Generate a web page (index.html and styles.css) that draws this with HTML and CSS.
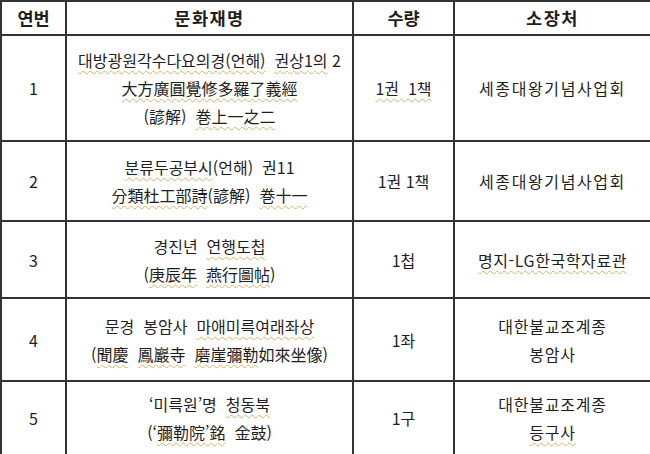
FILE: index.html
```html
<!DOCTYPE html>
<html lang="ko">
<head>
<meta charset="utf-8">
<link rel="stylesheet" href="styles.css">
</head>
<body>
<table class="tbl">
  <colgroup>
    <col class="c1"><col class="c2"><col class="c3"><col class="c4">
  </colgroup>
  <thead>
    <tr class="rh">
      <th>연번</th><th class="hname">문화재명</th><th>수량</th><th class="hold">소장처</th>
    </tr>
  </thead>
  <tbody>
    <tr class="r1">
      <td>1</td>
      <td><span class="sp">대방광원각수다요의경(언해)</span>&nbsp; <span class="sp">권상1의</span> 2<br><span class="sp">大方廣圓覺修多羅了義經</span><br>(諺解)&nbsp; <span class="sp">巻上一之二</span></td>
      <td><span class="sp">1권&nbsp; 1책</span></td>
      <td class="hold">세종대왕기념사업회</td>
    </tr>
    <tr class="r2">
      <td>2</td>
      <td><span class="sp">분류두공부시</span>(언해)&nbsp; 권11<br><span class="sp">分類杜工部詩</span>(諺解)&nbsp; <span class="sp">巻十一</span></td>
      <td>1권 1책</td>
      <td class="hold">세종대왕기념사업회</td>
    </tr>
    <tr class="r3">
      <td>3</td>
      <td>경진년&nbsp; <span class="sp">연행도첩</span><br>(<span class="sp">庚辰年</span>&nbsp; <span class="sp">燕行圖帖</span>)</td>
      <td>1첩</td>
      <td class="hold-s"><span class="sp">명지-LG한국학자료관</span></td>
    </tr>
    <tr class="r4">
      <td>4</td>
      <td>문경&nbsp; 봉암사&nbsp; <span class="sp">마애미륵여래좌상</span><br>(<span class="sp">聞慶</span>&nbsp; <span class="sp">鳳巖寺</span>&nbsp; <span class="sp">磨崖彌勒</span>如來坐像)</td>
      <td>1좌</td>
      <td class="hold-m">대한불교조계종<br>봉암사</td>
    </tr>
    <tr class="r5">
      <td>5</td>
      <td>‘미륵원’명&nbsp; <span class="sp">청동북</span><br>(‘<span class="sp">彌勒院’銘</span>&nbsp; 金鼓)</td>
      <td>1구</td>
      <td class="hold-m">대한불교조계종<br><span class="sp">등구사</span></td>
    </tr>
  </tbody>
</table>
</body>
</html>
```

FILE: styles.css
```css
html, body {
  margin: 0;
  padding: 0;
  background: #ffffff;
}

.tbl {
  border-collapse: collapse;
  table-layout: fixed;
  width: 650px;
  font-family: "Noto Sans CJK KR", "Noto Sans", sans-serif;
  font-size: 16px;
  color: #1e1e1e;
  line-height: 28px;
}

.c1 { width: 65px; }
.c2 { width: 287px; }
.c3 { width: 101px; }
.c4 { width: 197px; }

.tbl th,
.tbl td {
  border: 2px solid #333333;
  text-align: center;
  vertical-align: middle;
  padding: 0;
  font-weight: normal;
}

.tbl th {
  font-weight: bold;
  font-size: 17.5px;
}

.tbl .hname { letter-spacing: 1.5px; }

.tbl .hold { letter-spacing: 1.6px; }

.tbl .hold-s { letter-spacing: 0.6px; }

.tbl .hold-m { letter-spacing: 0.8px; }

.rh { height: 34px; }
.r1 { height: 106px; }
.r2 { height: 80px; }
.r3 { height: 77px; }
.r4 { height: 83px; }
.r5 { height: 74px; }

.sp {
  text-decoration-line: underline;
  text-decoration-style: wavy;
  text-decoration-color: #d2b46a;
  text-decoration-thickness: 1px;
  text-underline-offset: 3px;
}
```
